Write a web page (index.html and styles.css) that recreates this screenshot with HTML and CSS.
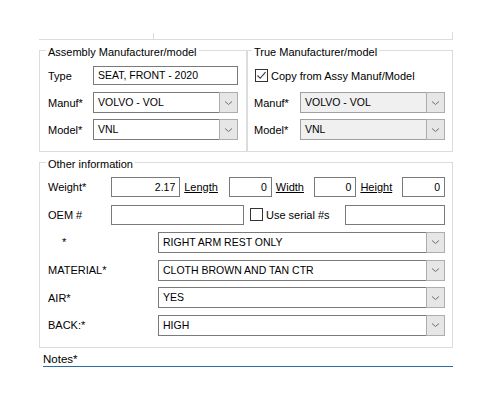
FILE: index.html
```html
<!DOCTYPE html>
<html lang="en">
<head>
    <meta charset="UTF-8">
    <title>Part details</title>
    <link rel="stylesheet" href="styles.css">
</head>
<body>
    <div class="form">
        <div class="prev"><div class="prev-left"></div></div>

        <div class="groups">
            <fieldset class="group assy">
                <legend>Assembly Manufacturer/model</legend>
                <div class="rows">
                    <div class="row">
                        <span class="lbl">Type</span>
                        <div class="field wide">SEAT, FRONT - 2020</div>
                    </div>
                    <div class="row">
                        <span class="lbl">Manuf*</span>
                        <div class="combo wide">
                            <div class="val">VOLVO - VOL</div>
                            <div class="btn"><svg width="9" height="6" viewBox="0 0 9 6"><path d="M1 1.5 L4.5 4.5 L8 1.5" fill="none" stroke="#707070" stroke-width="1"/></svg></div>
                        </div>
                    </div>
                    <div class="row">
                        <span class="lbl">Model*</span>
                        <div class="combo wide">
                            <div class="val">VNL</div>
                            <div class="btn"><svg width="9" height="6" viewBox="0 0 9 6"><path d="M1 1.5 L4.5 4.5 L8 1.5" fill="none" stroke="#707070" stroke-width="1"/></svg></div>
                        </div>
                    </div>
                </div>
            </fieldset>

            <fieldset class="group true">
                <legend>True Manufacturer/model</legend>
                <div class="rows">
                    <div class="row">
                        <span class="check on"><svg width="11" height="11" viewBox="0 0 11 11"><path d="M1.5 5.5 L4.2 8.3 L9.5 2.2" fill="none" stroke="#333" stroke-width="1.1"/></svg></span>
                        <span class="check-text">Copy from Assy Manuf/Model</span>
                    </div>
                    <div class="row">
                        <span class="lbl">Manuf*</span>
                        <div class="combo wide off">
                            <div class="val">VOLVO - VOL</div>
                            <div class="btn"><svg width="9" height="6" viewBox="0 0 9 6"><path d="M1 1.5 L4.5 4.5 L8 1.5" fill="none" stroke="#707070" stroke-width="1"/></svg></div>
                        </div>
                    </div>
                    <div class="row">
                        <span class="lbl">Model*</span>
                        <div class="combo wide off">
                            <div class="val">VNL</div>
                            <div class="btn"><svg width="9" height="6" viewBox="0 0 9 6"><path d="M1 1.5 L4.5 4.5 L8 1.5" fill="none" stroke="#707070" stroke-width="1"/></svg></div>
                        </div>
                    </div>
                </div>
            </fieldset>
        </div>

        <fieldset class="group other">
            <legend>Other information</legend>
            <div class="rows">
                <div class="row">
                    <span class="lbl short">Weight*</span>
                    <div class="field num weight">2.17</div>
                    <span class="link len">Length</span>
                    <div class="field num dim">0</div>
                    <span class="link wid">Width</span>
                    <div class="field num dim">0</div>
                    <span class="link hgt">Height</span>
                    <div class="field num dim">0</div>
                </div>
                <div class="row">
                    <span class="lbl short">OEM #</span>
                    <div class="field oem"></div>
                    <span class="check serial"></span>
                    <span class="check-text">Use serial #s</span>
                    <div class="field serial-no"></div>
                </div>
                <div class="row">
                    <span class="lbl long star">*</span>
                    <div class="combo full">
                        <div class="val">RIGHT ARM REST ONLY</div>
                        <div class="btn"><svg width="9" height="6" viewBox="0 0 9 6"><path d="M1 1.5 L4.5 4.5 L8 1.5" fill="none" stroke="#707070" stroke-width="1"/></svg></div>
                    </div>
                </div>
                <div class="row">
                    <span class="lbl long">MATERIAL*</span>
                    <div class="combo full">
                        <div class="val">CLOTH BROWN AND TAN CTR</div>
                        <div class="btn"><svg width="9" height="6" viewBox="0 0 9 6"><path d="M1 1.5 L4.5 4.5 L8 1.5" fill="none" stroke="#707070" stroke-width="1"/></svg></div>
                    </div>
                </div>
                <div class="row">
                    <span class="lbl long">AIR*</span>
                    <div class="combo full">
                        <div class="val">YES</div>
                        <div class="btn"><svg width="9" height="6" viewBox="0 0 9 6"><path d="M1 1.5 L4.5 4.5 L8 1.5" fill="none" stroke="#707070" stroke-width="1"/></svg></div>
                    </div>
                </div>
                <div class="row">
                    <span class="lbl long">BACK:*</span>
                    <div class="combo full">
                        <div class="val">HIGH</div>
                        <div class="btn"><svg width="9" height="6" viewBox="0 0 9 6"><path d="M1 1.5 L4.5 4.5 L8 1.5" fill="none" stroke="#707070" stroke-width="1"/></svg></div>
                    </div>
                </div>
            </div>
        </fieldset>

        <div class="notes">Notes*</div>
    </div>
</body>
</html>
```

FILE: styles.css
```css
body {
    margin: 0;
    background-color: #fff;
    font-family: "Liberation Sans", Arial, sans-serif;
    font-size: 11px;
    color: #000;
}

.form {
    width: 414px;
    margin-left: 39px;
}

/* bottom edge of the box above, scrolled out of view */
.prev {
    display: flex;
    height: 7px;
    margin-top: 32px;
    border-bottom: 1px solid #dcdcdc;
    border-right: 1px solid #dcdcdc;
}

.prev-left {
    width: 114px;
    margin-top: 1px;
    border-right: 1px solid #dcdcdc;
}

.groups {
    display: flex;
    margin-top: 2px;
}

.group {
    margin: 0;
    min-width: 0;
    padding: 0 7px 11px 8px;
    border: 1px solid #dcdcdc;
    box-sizing: border-box;
}

/* text sits a little below the frame line, as in a win32 group box */
.group legend {
    margin-left: -2px;
    padding: 3px 2px 0;
    line-height: 14px;
}

.assy {
    width: 208px;
}

.true {
    flex: 1;
    padding-left: 6px;
}

.other {
    width: 414px;
    margin-top: 2px;
}

.rows {
    display: flex;
    flex-direction: column;
    gap: 6px;
    padding-top: 6px;
}

.other .rows {
    gap: 6.7px;
    padding-top: 5.5px;
}

.row {
    display: flex;
    align-items: center;
    height: 21px;
}

.lbl {
    width: 45px;
    flex: none;
}

.true .lbl {
    width: 46px;
}

.lbl.short {
    width: 63px;
}

.lbl.long {
    width: 110px;
}

.lbl.star {
    width: 96px;
    padding-left: 14px;
}

.field {
    box-sizing: border-box;
    height: 19px;
    padding: 0 4px;
    border: 1px solid #7a7a7a;
    background-color: #fff;
    font-size: 10.5px;
    line-height: 17px;
    white-space: nowrap;
    overflow: hidden;
}

.other .field {
    height: 20px;
    line-height: 18px;
}

.field.num {
    text-align: right;
    padding-right: 4px;
}

.wide {
    width: 145px;
}

.weight {
    width: 70px;
}

.dim {
    width: 43px;
}

.link {
    text-decoration: underline;
    flex: none;
}

.len {
    width: 45px;
    margin-left: 4px;
}

.wid {
    width: 38px;
    margin-left: 4px;
}

.hgt {
    width: 42px;
    margin-left: 4px;
}

.oem {
    width: 133px;
}

.serial-no {
    width: 100px;
    margin-left: auto;
}

.check {
    display: flex;
    align-items: center;
    justify-content: center;
    box-sizing: border-box;
    width: 13px;
    height: 13px;
    border: 1px solid #333;
    background-color: #fff;
    flex: none;
}

.true .check {
    margin-left: 1px;
}

.check.serial {
    margin-left: 6px;
}

.check-text {
    margin-left: 3px;
}

.combo {
    display: flex;
    box-sizing: border-box;
    height: 21px;
}

.combo .val {
    flex: 1;
    padding: 0 4px;
    border: 1px solid #7a7a7a;
    border-right: none;
    background-color: #fff;
    font-size: 10.5px;
    line-height: 19px;
    white-space: nowrap;
    overflow: hidden;
}

.combo .btn {
    width: 17px;
    display: flex;
    align-items: center;
    justify-content: center;
    border: 1px solid #adadad;
    background-color: #e6e6e6;
}

.combo.off .val {
    background-color: #f0f0f0;
    border-color: #a0a0a0;
}

.full {
    width: 287px;
}

.notes {
    width: 410px;
    margin: 3px 0 0 4px;
    padding-top: 2px;
    border-bottom: 1px solid #2a6ca4;
    font-size: 11.5px;
    line-height: 13px;
}
```
